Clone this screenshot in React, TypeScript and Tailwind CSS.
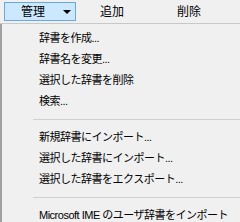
import React from 'react';

const font = { fontFamily: '"Liberation Sans", "Noto Sans CJK JP", sans-serif' };

type Entry = { label: string } | { sep: true };

const entries: Entry[] = [
  { label: '辞書を作成...' },
  { label: '辞書名を変更...' },
  { label: '選択した辞書を削除' },
  { label: '検索...' },
  { sep: true },
  { label: '新規辞書にインポート...' },
  { label: '選択した辞書にインポート...' },
  { label: '選択した辞書をエクスポート...' },
  { sep: true },
  { label: 'Microsoft IME のユーザ辞書をインポート' },
];

export default function App() {
  return (
    <div className="w-[240px] h-[222px] bg-[#f0f0f0] overflow-hidden text-[11px] text-black" style={font}>
      {/* toolbar */}
      <div className="h-[24px] flex items-start border-b border-[#c8c8c8]">
        <div className="ml-[4px] mt-[2px] w-[72px] h-[19px] bg-[#cce8ff] border border-[#6aa8e0] flex items-center">
          <span className="ml-[16px] leading-none text-[12px]">管理</span>
          <span className="ml-[18px] w-0 h-0 border-l-[4px] border-r-[4px] border-t-[4px] border-l-transparent border-r-transparent border-t-black" />
        </div>
        <div className="ml-[24px] mt-[2px] h-[19px] flex items-center leading-none text-[12px]">追加</div>
        <div className="ml-[53px] mt-[2px] h-[19px] flex items-center leading-none text-[12px]">削除</div>
      </div>
      {/* menu */}
      <div className="h-[198px] border-l-2 border-[#a0a0a0] pt-[4px]">
        {entries.map((e, i) =>
          'sep' in e ? (
            <div key={i} className="h-[15px] flex items-center pl-[31px]">
              <div className="h-px w-full bg-[#d0d0d0]" />
            </div>
          ) : (
            <div key={i} className="h-[21px] flex items-center pl-[37px] leading-none whitespace-nowrap tracking-[-0.5px]">
              {e.label}
            </div>
          )
        )}
      </div>
    </div>
  );
}
